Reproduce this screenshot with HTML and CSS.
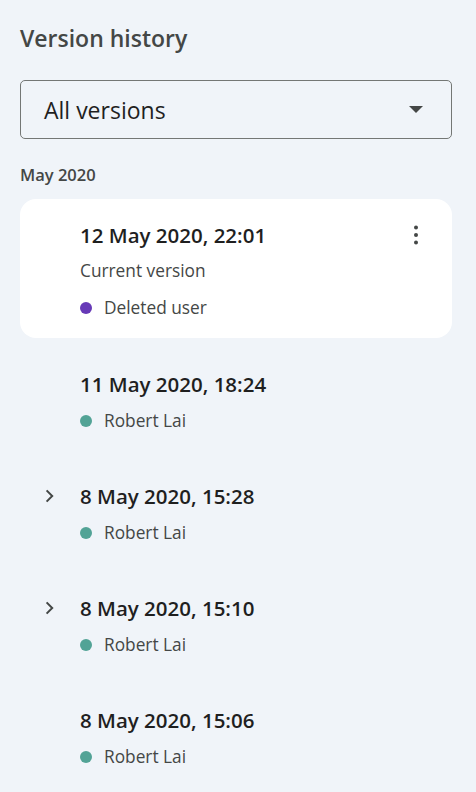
FILE: index.html
```html
<!DOCTYPE html>
<html lang="en">
<head>
<meta charset="utf-8">
<title>Version history</title>
<link rel="stylesheet" href="styles.css">
</head>
<body>
<div class="panel">
  <h1 class="title">Version history</h1>
  <div class="select">
    <span class="select-label">All versions</span>
    <svg class="select-arrow" width="14" height="7" viewBox="0 0 14 7"><path d="M0 0h14L7 7z" fill="#444746"/></svg>
  </div>
  <div class="month">May 2020</div>
  <ul class="list">
    <li class="item card">
      <div class="lead"></div>
      <div class="body">
        <div class="date">12 May 2020, 22:01</div>
        <div class="sub">Current version</div>
        <div class="author"><span class="dot purple"></span>Deleted user</div>
      </div>
      <div class="more">
        <svg width="24" height="24" viewBox="0 0 24 24"><circle cx="12" cy="4.5" r="2" fill="#444746"/><circle cx="12" cy="12" r="2" fill="#444746"/><circle cx="12" cy="19.5" r="2" fill="#444746"/></svg>
      </div>
    </li>
    <li class="item">
      <div class="lead"></div>
      <div class="body">
        <div class="date">11 May 2020, 18:24</div>
        <div class="author"><span class="dot teal"></span>Robert Lai</div>
      </div>
    </li>
    <li class="item">
      <div class="lead"><svg width="24" height="24" viewBox="0 0 24 24"><path d="M8.6 6.4l5.6 5.6-5.6 5.6" fill="none" stroke="#444746" stroke-width="2"/></svg></div>
      <div class="body">
        <div class="date">8 May 2020, 15:28</div>
        <div class="author"><span class="dot teal"></span>Robert Lai</div>
      </div>
    </li>
    <li class="item">
      <div class="lead"><svg width="24" height="24" viewBox="0 0 24 24"><path d="M8.6 6.4l5.6 5.6-5.6 5.6" fill="none" stroke="#444746" stroke-width="2"/></svg></div>
      <div class="body">
        <div class="date">8 May 2020, 15:10</div>
        <div class="author"><span class="dot teal"></span>Robert Lai</div>
      </div>
    </li>
    <li class="item">
      <div class="lead"></div>
      <div class="body">
        <div class="date">8 May 2020, 15:06</div>
        <div class="author"><span class="dot teal"></span>Robert Lai</div>
      </div>
    </li>
  </ul>
</div>
</body>
</html>
```
FILE: styles.css
```css
* { box-sizing: border-box; }
html, body { margin: 0; padding: 0; }
body {
  background: #f0f4f9;
  font-family: "Open Sans", "Liberation Sans", sans-serif;
  color: #1f1f1f;
  width: 476px;
  height: 792px;
  overflow: hidden;
}
.panel {
  padding: 23px 24px 0 20px;
  display: flex;
  flex-direction: column;
}
.title {
  margin: 0;
  font-size: 23px;
  line-height: 30px;
  font-weight: 600;
  color: #444746;
}
.select {
  margin-top: 27px;
  height: 59px;
  border: 1px solid #747775;
  border-radius: 5px;
  display: flex;
  align-items: center;
  justify-content: space-between;
  padding: 0 28px 0 23px;
}
.select-label {
  font-size: 23px;
  color: #1f1f1f;
}
.month {
  margin-top: 25px;
  font-size: 16.5px;
  line-height: 22px;
  font-weight: 600;
  color: #444746;
}
.list {
  list-style: none;
  margin: 13px 0 0;
  padding: 0;
  display: flex;
  flex-direction: column;
  gap: 9px;
}
.item {
  display: grid;
  grid-template-columns: 60px 1fr auto;
  padding: 25px 0 17px;
  border-radius: 16px;
}
.item.card {
  background: #ffffff;
  padding: 24px 24px 18px 0;
}
.lead {
  display: flex;
  justify-content: center;
  align-items: flex-start;
  height: 24px;
}
.lead svg { display: block; }
.body {
  display: flex;
  flex-direction: column;
}
.date {
  font-size: 20.5px;
  line-height: 24px;
  font-weight: 600;
  color: #1f1f1f;
}
.sub {
  margin-top: 12px;
  font-size: 17.3px;
  line-height: 24px;
  color: #444746;
}
.author {
  margin-top: 13px;
  display: flex;
  align-items: center;
  font-size: 17.3px;
  line-height: 24px;
  color: #444746;
}
.dot {
  width: 12px;
  height: 12px;
  border-radius: 50%;
  margin-right: 12px;
  flex: none;
}
.dot.purple { background: #673ab7; }
.dot.teal { background: #52a396; }
.more svg { display: block; }
```
